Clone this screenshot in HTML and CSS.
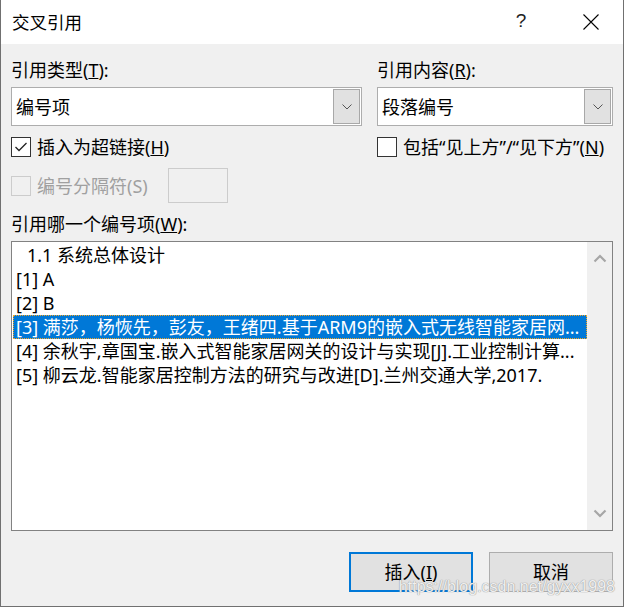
FILE: index.html
```html
<!DOCTYPE html>
<html lang="zh-CN">
<head>
<meta charset="utf-8">
<title>交叉引用</title>
<link rel="stylesheet" href="styles.css">
</head>
<body>
<div class="window">
  <div class="titlebar">
    <div class="title">交叉引用</div>
    <div class="tb-btn help">?</div>
    <div class="tb-btn close">
      <svg width="16" height="16" viewBox="0 0 16 16"><path d="M0.5 0.5 L15.5 15.5 M15.5 0.5 L0.5 15.5" stroke="#000" stroke-width="1.1" fill="none"/></svg>
    </div>
  </div>
  <div class="content">
    <div class="two-col">
      <div class="col">
        <div class="label">引用类型(<u>T</u>):</div>
        <div class="combo">
          <span class="combo-text">编号项</span>
          <span class="combo-btn"><svg width="10" height="6" viewBox="0 0 10 6"><path d="M0.5 0.5 L5 5 L9.5 0.5" stroke="#555" stroke-width="1" fill="none"/></svg></span>
        </div>
        <div class="check-row">
          <span class="checkbox"><svg width="18" height="18" viewBox="0 0 18 18"><path d="M3.5 9 L7 12.5 L14.5 5" stroke="#222" stroke-width="1.3" fill="none"/></svg></span>
          <span class="check-label">插入为超链接(<u>H</u>)</span>
        </div>
        <div class="sep-row">
          <span class="checkbox disabled"></span>
          <span class="check-label dim">编号分隔符(S)</span>
          <span class="sep-input"></span>
        </div>
      </div>
      <div class="col">
        <div class="label">引用内容(<u>R</u>):</div>
        <div class="combo">
          <span class="combo-text">段落编号</span>
          <span class="combo-btn"><svg width="10" height="6" viewBox="0 0 10 6"><path d="M0.5 0.5 L5 5 L9.5 0.5" stroke="#555" stroke-width="1" fill="none"/></svg></span>
        </div>
        <div class="check-row">
          <span class="checkbox"></span>
          <span class="check-label">包括“见上方”/“见下方”(<u>N</u>)</span>
        </div>
      </div>
    </div>
    <div class="label label-list">引用哪一个编号项(<u>W</u>):</div>
    <div class="listbox">
      <ul class="items">
        <li class="item indent">1.1 系统总体设计</li>
        <li class="item">[1] A</li>
        <li class="item">[2] B</li>
        <li class="item selected">[3] 满莎，杨恢先，彭友，王绪四.基于ARM9的嵌入式无线智能家居网...</li>
        <li class="item">[4] 余秋宇,章国宝.嵌入式智能家居网关的设计与实现[J].工业控制计算...</li>
        <li class="item">[5] 柳云龙.智能家居控制方法的研究与改进[D].兰州交通大学,2017.</li>
      </ul>
      <div class="scrollbar">
        <svg width="14" height="9" viewBox="0 0 14 9"><path d="M1.5 7.5 L7 2 L12.5 7.5" stroke="#a6a6a6" stroke-width="2.2" fill="none"/></svg>
        <svg width="14" height="9" viewBox="0 0 14 9"><path d="M1.5 1.5 L7 7 L12.5 1.5" stroke="#a6a6a6" stroke-width="2.2" fill="none"/></svg>
      </div>
    </div>
    <div class="buttons">
      <div class="btn default">插入(<u>I</u>)</div>
      <div class="btn">取消</div>
      <div class="watermark">https://blog.csdn.net/gyxx1998</div>
    </div>
  </div>
</div>
</body>
</html>
```
FILE: styles.css
```css
html, body {
  margin: 0;
  padding: 0;
  background: #ffffff;
}
body {
  font-family: "Noto Sans", "Noto Sans CJK SC", sans-serif;
  font-size: 18px;
  color: #000;
}
.window {
  width: 622px;
  height: 606px;
  border: 1px solid #707070;
  border-top: none;
  background: #f0f0f0;
  display: flex;
  flex-direction: column;
}
.titlebar {
  height: 44px;
  background: #ffffff;
  display: flex;
  align-items: center;
  padding-right: 9px;
}
.title {
  flex: 1;
  padding-left: 11px;
  font-size: 17.5px;
  line-height: 24px;
}
.tb-btn {
  width: 46px;
  height: 44px;
  display: flex;
  align-items: center;
  justify-content: center;
}
.help {
  font-family: "Liberation Sans", sans-serif;
  font-size: 19px;
  font-weight: normal;
  color: #222;
  margin-right: 24px;
  padding-bottom: 2px;
  box-sizing: border-box;
}
.close svg {
  display: block;
}
.content {
  padding-left: 10px;
  position: relative;
}
.two-col {
  display: grid;
  grid-template-columns: 351px 236px;
  column-gap: 15px;
}
.label {
  line-height: 24px;
  height: 24px;
  margin-top: 14px;
  white-space: nowrap;
}
.combo {
  margin-top: 5px;
  height: 37px;
  border: 1px solid #adadad;
  background: #fff;
  display: flex;
  align-items: center;
  padding: 0 1px 0 4px;
}
.combo-text {
  flex: 1;
  line-height: 24px;
}
.combo-btn {
  width: 25px;
  height: 33px;
  border: 1px solid #a8a8a8;
  background: #e1e1e1;
  display: flex;
  align-items: center;
  justify-content: center;
}
.combo-btn svg {
  display: block;
}
.check-row {
  margin-top: 11px;
  height: 20px;
  display: flex;
  align-items: center;
}
.checkbox {
  width: 18px;
  height: 18px;
  border: 1px solid #333;
  background: #fff;
  flex: none;
  display: block;
}
.checkbox svg {
  display: block;
}
.checkbox.disabled {
  border-color: #cccccc;
  background: #f0f0f0;
}
.check-label {
  margin-left: 6px;
  line-height: 24px;
  white-space: nowrap;
}
.check-label.dim {
  color: #a0a0a0;
}
.sep-row {
  margin-top: 11px;
  height: 35px;
  display: flex;
  align-items: center;
}
.sep-input {
  margin-left: 20px;
  width: 58px;
  height: 33px;
  border: 1px solid #cccccc;
  background: #f0f0f0;
}
.label-list {
  margin-top: 9px;
}
.listbox {
  margin-top: 5px;
  width: 600px;
  height: 288px;
  border: 1px solid #828282;
  background: #fff;
  display: flex;
}
.items {
  list-style: none;
  margin: 0;
  padding: 1px 0 0 1px;
  flex: 1;
  min-width: 0;
}
.item {
  height: 24px;
  line-height: 24px;
  padding-left: 3px;
  white-space: nowrap;
  overflow: hidden;
  box-sizing: border-box;
}
.item.indent {
  padding-left: 14px;
}
.item.selected {
  background: #0078d7;
  color: #fff;
  outline: 1px dotted #f5a623;
  outline-offset: -1px;
}
.scrollbar {
  width: 25px;
  background: #f0f0f0;
  display: flex;
  flex-direction: column;
  justify-content: space-between;
  align-items: center;
  padding: 12px 0 12px;
  box-sizing: border-box;
}
.scrollbar svg {
  display: block;
}
.buttons {
  margin-top: 21px;
  width: 602px;
  display: flex;
  justify-content: flex-end;
  gap: 16px;
  position: relative;
}
.btn {
  width: 122px;
  height: 38px;
  border: 1px solid #adadad;
  background: #e1e1e1;
  display: flex;
  align-items: center;
  justify-content: center;
  line-height: 24px;
}
.btn.default {
  width: 120px;
  height: 36px;
  border: 2px solid #0078d7;
}
.watermark {
  position: absolute;
  right: -2px;
  top: 26px;
  font-family: "Liberation Sans", Arial, sans-serif;
  font-size: 16px;
  color: rgba(255, 255, 255, 0.85);
  text-shadow: 0 0 1px #9a9a9a, 0 0 1px #9a9a9a;
  white-space: nowrap;
}
```
